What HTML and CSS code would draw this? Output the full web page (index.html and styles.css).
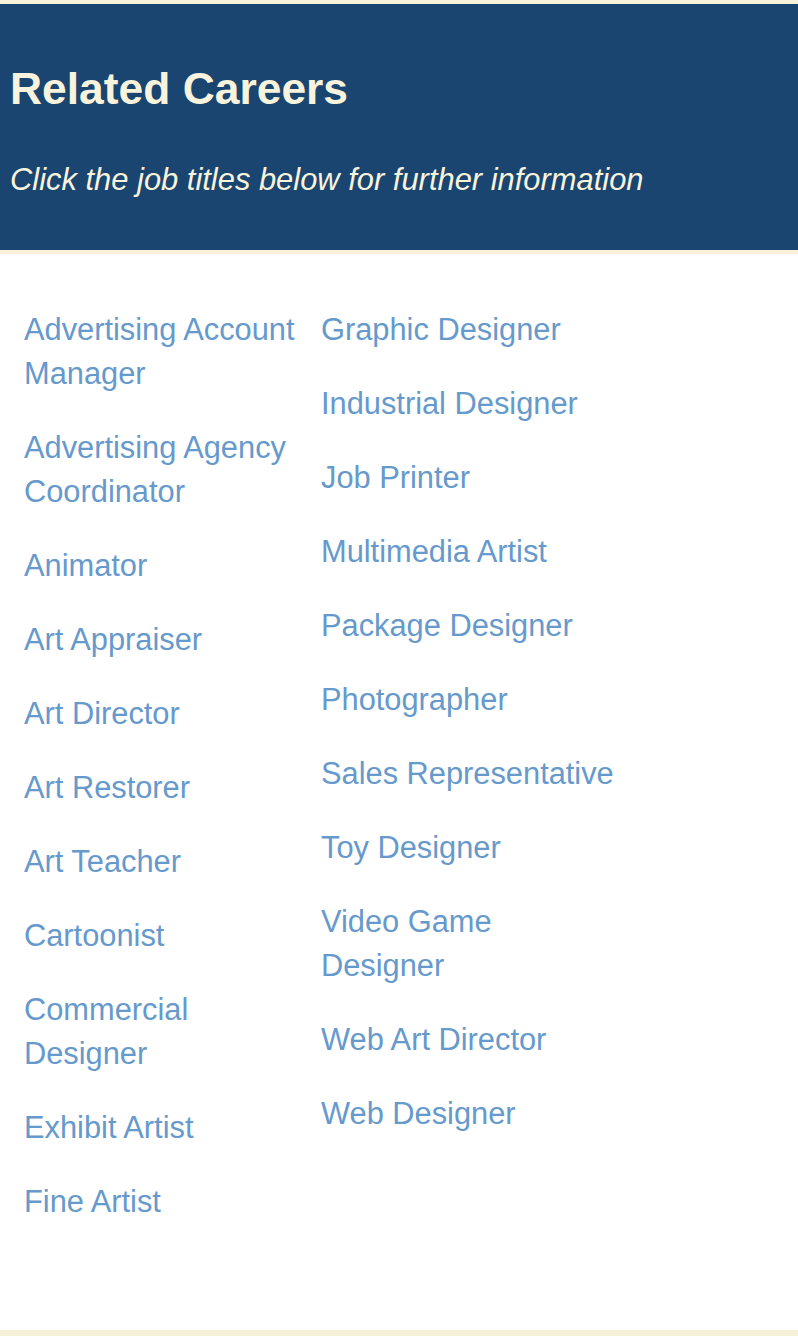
FILE: index.html
```html
<!DOCTYPE html>
<html lang="en">
<head>
<meta charset="utf-8">
<title>Related Careers</title>
<link rel="stylesheet" href="styles.css">
</head>
<body>
<header class="banner">
  <h1 class="banner-title">Related Careers</h1>
  <p class="banner-sub">Click the job titles below for further information</p>
</header>
<main class="careers">
  <ul class="career-col">
    <li><a href="#">Advertising Account Manager</a></li>
    <li><a href="#">Advertising Agency Coordinator</a></li>
    <li><a href="#">Animator</a></li>
    <li><a href="#">Art Appraiser</a></li>
    <li><a href="#">Art Director</a></li>
    <li><a href="#">Art Restorer</a></li>
    <li><a href="#">Art Teacher</a></li>
    <li><a href="#">Cartoonist</a></li>
    <li><a href="#">Commercial Designer</a></li>
    <li><a href="#">Exhibit Artist</a></li>
    <li><a href="#">Fine Artist</a></li>
  </ul>
  <ul class="career-col">
    <li><a href="#">Graphic Designer</a></li>
    <li><a href="#">Industrial Designer</a></li>
    <li><a href="#">Job Printer</a></li>
    <li><a href="#">Multimedia Artist</a></li>
    <li><a href="#">Package Designer</a></li>
    <li><a href="#">Photographer</a></li>
    <li><a href="#">Sales Representative</a></li>
    <li><a href="#">Toy Designer</a></li>
    <li><a href="#">Video Game<br>Designer</a></li>
    <li><a href="#">Web Art Director</a></li>
    <li><a href="#">Web Designer</a></li>
  </ul>
</main>
</body>
</html>
```
FILE: styles.css
```css
html, body {
  margin: 0;
  padding: 0;
}
body {
  background: #f7f1d9;
  font-family: "Liberation Sans", Arial, Helvetica, sans-serif;
  padding-top: 4px;
}
.banner {
  background: #1a4570;
  color: #f8f3dc;
  padding: 59px 10px 52px;
  height: 246px;
  box-sizing: border-box;
}
.banner-title {
  margin: 0;
  font-size: 44.4px;
  line-height: 52px;
  font-weight: bold;
}
.banner-sub {
  margin: 47px 0 0;
  font-size: 30.9px;
  line-height: 36px;
  font-style: italic;
}
.careers {
  margin-top: 4px;
  background: #fff;
  height: 1076px;
  box-sizing: border-box;
  padding: 54px 0 0 24px;
  display: grid;
  grid-template-columns: 280px 302px;
  column-gap: 17px;
  align-items: start;
}
.career-col {
  list-style: none;
  margin: 0;
  padding: 0;
  display: flex;
  flex-direction: column;
  gap: 30px;
}
.career-col li {
  font-size: 30.8px;
  line-height: 44px;
}
.career-col a {
  color: #6699cc;
  text-decoration: none;
}
```
